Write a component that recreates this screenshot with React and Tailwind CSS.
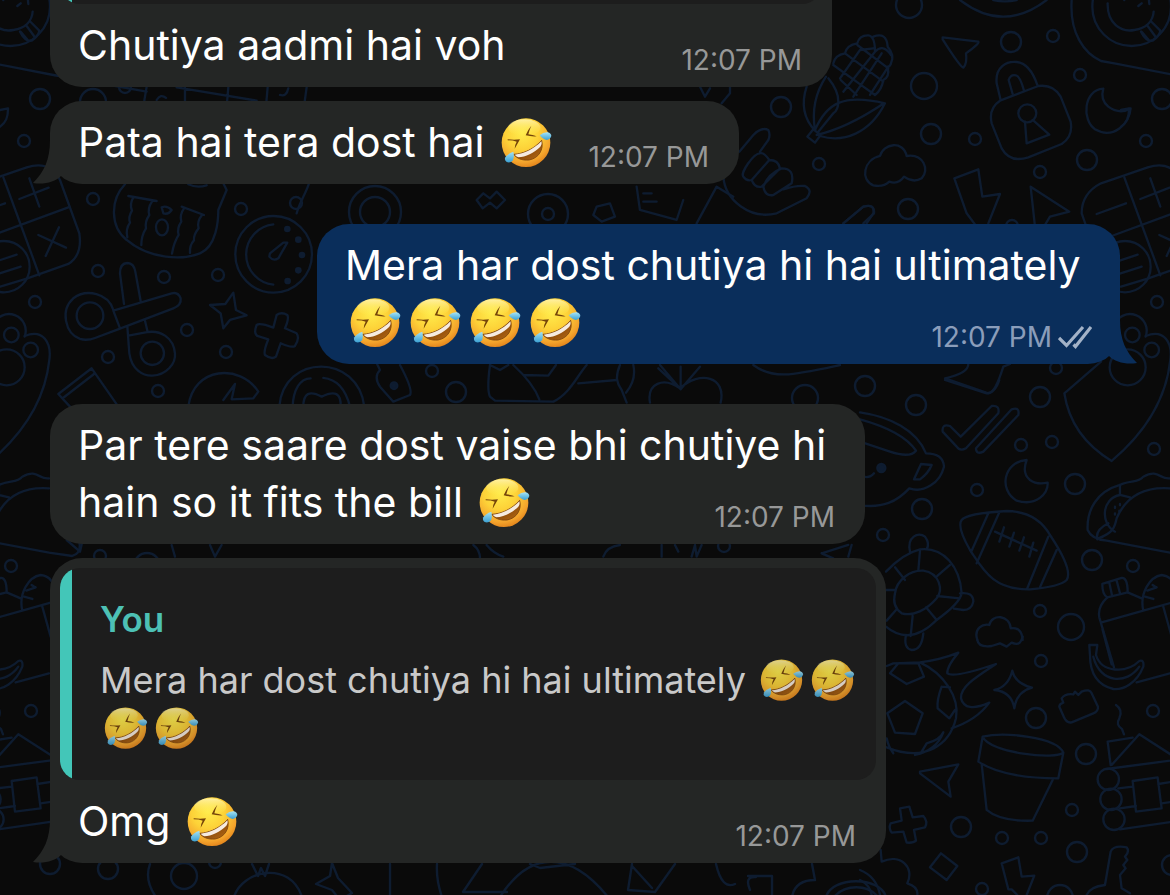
import React, { useId } from "react";

const RINGS = [
  [40, 99, 10], [93, 102, 13], [24, 141, 6], [93, 199, 6], [241, 209, 6], [296, 203, 6], [98, 271, 6],
  [164, 277, 6], [218, 275, 6], [35, 302, 6], [187, 330, 6], [108, 357, 6], [226, 352, 6], [158, 391, 6],
  [125, 87, 6], [909, 5, 13], [1011, 42, 10], [1053, 36, 6], [924, 86, 13], [931, 134, 10], [975, 139, 6],
  [1080, 75, 6], [1162, 99, 10], [1146, 141, 6], [1087, 160, 10], [1040, 172, 6], [908, 209, 10],
  [819, 164, 6], [1012, 226, 6], [916, 405, 10], [1040, 397, 10], [1056, 368, 6], [1157, 302, 6],
  [1021, 445, 6], [1052, 442, 6], [977, 490, 6], [1075, 484, 10], [922, 509, 10], [883, 535, 6],
  [1154, 449, 6], [1092, 560, 10], [1133, 566, 6], [1040, 611, 6], [1071, 627, 13], [1041, 661, 6],
  [1036, 718, 10], [1153, 711, 6], [1086, 754, 10], [1072, 810, 6], [961, 827, 10], [1002, 838, 6],
  [1041, 838, 6], [1077, 852, 10], [982, 889, 6], [1060, 898, 13], [1172, 865, 10], [11, 566, 6],
  [100, 556, 6], [147, 566, 13], [31, 711, 6], [50, 864, 10], [108, 869, 10], [184, 876, 13],
  [215, 862, 6], [432, 371, 6], [456, 392, 10], [865, 386, 10], [805, 398, 13], [724, 546, 6],
  [781, 107, 10], [548, 214, 20], [548, 214, 6], [375, 212, 26], [375, 212, 15],
];

/* Group whose children are drawn on a grid three times finer than the page. */
function Fine({ x, y, children }) {
  return <g transform={`translate(${x} ${y}) scale(0.3333)`} strokeWidth="7">{children}</g>;
}

/* Doodles at the seam of the wallpaper, repeated on both edges. */
function SeamDoodles() {
  return (
    <>
      <Fine x={1121} y={0}>
        <circle cx="32" cy="20" r="118" />
        <path d="M-40 10C-42 70 0 98 40 90C80 84 96 60 98 35M62 95L85 122M80 78L102 108M92 66L118 92M60 95Q75 125 95 122Q115 110 118 92M10 0l-4-6M62 10l-10 8M85 12l-2-20" />
        <path d="M-148 0C-155 100-110 160-60 183L-20 190L160 225L440 275" />
        <path d="M-90 720L-118 640Q-118 580-60 550L8 527L80 502Q150 480 180 540L238 700Q248 765 205 792L80 836L0 860" />
        <path d="M10 532L118 826M-28 708L205 622M88 535L118 620M58 597L146 563M-73 642L15 610M115 705L198 743M177 682L137 768" />
        <circle cx="12" cy="800" r="77" />
        <path d="M-20 787L50 764M-20 826L62 800" />
        <circle cx="34" cy="1005" r="22" />
        <path d="M-20 975A48 48 0 0 1 74 1010" />
        <circle cx="92" cy="1050" r="22" />
        <circle cx="20" cy="1102" r="54" />
        <path d="M74 1008C130 985 155 1030 148 1080Q130 1250-28 1383Q-150 1310-170 1180L-60 1085" />
        <path d="M0 380Q25 365 24 325L0 330" />
      </Fine>
      <Fine x={860} y={380}>
        <path d="M930 295C900 300 895 265 850 290C835 310 810 300 780 315C710 335 680 390 683 450Q695 478 740 482L930 518L1000 528Q1030 520 1020 480" />
        <path d="M715 475C760 460 765 440 770 415C800 345 860 320 930 325M765 455C720 430 725 355 780 345L810 352M780 315v28M712 478Q705 450 745 430M765 380v4M780 372v4M765 400v4M778 392v4" />
        <path d="M727 612L785 594Q803 592 803 637L742 652Q727 645 727 612ZM748 608L756 646M770 602L780 640" />
        <path d="M742 652Q712 680 718 712L762 862M803 637L845 655M850 692C838 640 870 590 905 585Q950 590 948 650M725 727L850 692L935 668M855 650L880 657M862 632L890 622M878 615L888 622M910 680L935 770" />
      </Fine>
      <Fine x={860} y={630}>
        <path d="M688 45H712L708 75C725 130 800 130 838 93Q853 88 850 110C830 160 790 180 760 177C710 165 690 130 690 75ZM700 80C720 160 800 165 838 110M728 0L755 103M830 157L930 130" />
        <path d="M768 225q22 15 10 40q-12 20 8 32l6 16" />
        <path d="M752 405L743 335L818 323M755 405L838 313L955 388M740 417L960 388" />
        <circle cx="745" cy="448" r="32" /><circle cx="753" cy="508" r="32" /><circle cx="762" cy="568" r="32" />
        <path d="M818 453L893 442L905 535L828 545ZM775 475L818 470M780 535L828 528M895 462L960 452M905 520L960 512M780 598L960 572" />
      </Fine>
    </>
  );
}

function Wallpaper() {
  return (
    <svg
      aria-hidden="true"
      viewBox="0 0 1170 895"
      preserveAspectRatio="xMidYMid slice"
      className="absolute inset-0 h-full w-full"
      fill="none"
      stroke="#0e1c30"
      strokeWidth="2.4"
      strokeLinecap="round"
      strokeLinejoin="round"
    >
      {RINGS.map(([x, y, r], i) => <circle key={i} cx={x} cy={y} r={r} />)}
      <SeamDoodles />
      <g transform="translate(-1121 0)"><SeamDoodles /></g>

      <Fine x={0} y={0}>
        <path d="M440 260L430 320M555 262V320M685 262L680 320M803 262L798 320M920 262L912 320M530 262L770 302M470 300q12-20 28-6M840 285q20 6 25-20" />
        <path d="M375 553C330 600 330 680 380 720C450 780 550 780 600 760C650 740 655 660 655 630L680 570L670 550M565 553Q590 565 620 556" />
        <path d="M385 588L470 603M400 592q-12 20-4 40q-12 20-6 36q-14 20-8 44M456 605q-14 20-8 40q-14 20-10 40q-14 22-14 50M545 620L612 645M552 625q-14 20-8 40q-14 20-8 40q-14 22-20 56M606 645q-16 20-10 40q-16 20-14 36q-14 16-12 38M485 622Q500 615 515 630Q505 645 490 640Z" />
        <ellipse cx="486" cy="682" rx="18" ry="24" />
        <circle cx="821" cy="763" r="115" />
        <path d="M820 673A91 91 0 0 0 820 854M862 728L835 775Q820 785 808 770L810 760L850 728Z" />
        <g fill="#0e1c30" stroke="none"><circle cx="862" cy="687" r="10" /><circle cx="895" cy="719" r="10" /><circle cx="906" cy="765" r="10" /><circle cx="895" cy="811" r="10" /><circle cx="863" cy="843" r="10" /></g>
        <circle cx="270" cy="947" r="40" /><circle cx="457" cy="1060" r="35" />
        <path d="M340 930C325 880 260 865 220 895C180 930 195 1000 240 1017Q262 1023 285 1014L350 990L520 925Q545 915 542 895Q535 875 515 880L340 932L360 985M372 912L360 820Q360 790 382 789Q402 790 406 815L422 903M382 978L388 1060C395 1110 430 1128 457 1127C500 1125 528 1090 525 1060C520 1010 480 992 445 996L385 1007M434 958L443 996" />
        <path d="M700 878L708 930L740 946L690 960L670 985L662 940L630 915L676 912Z" />
        <path d="M830 945Q845 935 862 945Q868 955 855 985L890 1000Q900 1015 885 1038Q875 1045 842 1030L828 1070Q815 1080 795 1065Q790 1055 805 1018L772 1008Q760 1000 770 975Q780 968 820 983Z" />
        <path d="M355 1220L275 1105L175 1182L210 1220M188 1195L285 1120M565 1220C580 1100 720 1090 775 1175L760 1195L695 1198L705 1152L670 1200" />
        <path d="M838 1220C850 1060 1075 1060 1093 1220M878 1220C880 1170 900 1135 932 1135M970 1134Q1030 1140 1050 1220M910 1220Q910 1160 965 1190Q1025 1160 1022 1220" />
      </Fine>

      <Fine x={820} y={0}>
        <path d="M420 0Q550 100 680 0M520 0Q555 8 590 0" />
        <path d="M368 112L475 125Q480 130 438 160Q442 190 430 203Q420 200 368 118Z" />
        <path d="M542 300L530 250C525 200 560 183 590 186Q630 190 652 255M578 282L566 240Q572 222 588 226Q600 228 612 272" />
        <path d="M540 302L655 258Q700 252 722 290L752 365Q760 410 725 432L625 472Q570 490 545 445L515 370Q505 325 540 302Z" />
        <circle cx="622" cy="340" r="27" />
        <path d="M615 365L620 430L688 404L638 360" />
        <path d="M850 266C790 270 785 360 825 388C880 420 930 370 932 325Q900 345 865 320Q840 300 850 266Z" />
        <path d="M160 556C120 540 130 480 180 468C190 430 250 420 260 468C310 460 330 510 305 535Q280 550 252 530Q235 555 208 545Q190 562 160 556Z" />
        <path d="M470 680L440 640L403 535L475 508L487 590L540 582L505 670M645 680L632 560L748 635L690 650L672 680M70 670L130 620Q165 610 162 640L130 670" />
        <path d="M40 190Q45 165 75 160Q80 135 112 130Q118 105 145 106Q165 108 165 155M160 110Q200 95 203 140Q225 165 213 190Q210 200 203 200Q210 230 190 240Q185 270 165 285M75 160L190 245M112 135L205 205M40 195L130 260L165 285M60 235L120 150L160 145M70 275L165 155M100 290L185 160M150 285L205 200M62 240L110 285M165 155Q190 130 213 165" />
      </Fine>

      <Fine x={700} y={60}>
        <path d="M345 210C380 130 430 100 555 130C510 220 430 250 360 228M350 225Q440 205 552 130M385 55C430 110 415 150 400 160L355 215M320 80C300 140 315 180 345 212M378 50C345 100 335 150 345 210M340 208L362 225L345 248L322 230Z" />
        <path d="M118 275L160 225Q185 200 205 210Q212 225 205 240L180 275M70 350C75 420 150 480 230 460L320 415Q340 390 315 378Q290 375 250 388M180 280C160 280 120 340 130 350Q140 365 155 360L208 300Q190 275 180 280ZM155 360Q165 385 185 380L240 325Q235 300 208 300M190 380Q195 410 220 405L275 370Q285 325 245 325Q205 340 190 380M65 130L90 100V80M0 80L15 110L30 85M430 490L490 440Q525 430 520 460L500 490" />
      </Fine>

      <Fine x={300} y={180}>
        <path d="M30 0C20 40 0 60-10 100M530 60L550 40L570 55L590 35L615 60L590 85L570 68L548 85ZM890 80L930 70L945 110L905 125L880 105ZM1010 20L1020 90L1130 120L1150 60M1030 40h25M1030 65h40M1190 130L1250 20L1300 50" />
      </Fine>
      <Fine x={300} y={280}>
        <path d="M230 250L240 270Q220 290 240 320L280 365L330 345Q340 330 300 255M570 255Q560 330 570 350L585 362L760 365C810 340 830 290 860 255M570 255L600 270L625 255M640 255Q700 310 718 358M670 285L745 287L768 255M835 310L950 300" />
        <circle cx="282" cy="317" r="10" fill="#0e1c30" />
      </Fine>
      <Fine x={460} y={350}>
        <path d="M480 45C465 80 470 100 485 120L500 158M520 45Q530 90 498 128M570 158C560 100 610 80 660 115C720 60 800 80 782 158M660 115L595 55M662 118L600 45M662 118V50M662 118L720 50M880 45C940 90 1000 75 1140 45" />
        <path d="M40 585Q60 600 60 625M80 585Q100 610 130 620M430 620Q440 590 480 585M605 585V620M645 585L655 605M695 620L705 585L710 620L725 585M1085 610L1165 585M1165 620L1175 585M1085 610L1120 625" />
      </Fine>

      <Fine x={880} y={230}>
        <path d="M265 402Q265 430 195 445L325 490Q345 490 370 410L390 402" />
      </Fine>

      <Fine x={860} y={380}>
        <path d="M0 97C90 110 170 150 198 220Q250 220 252 260C240 310 190 340 148 325C110 365 70 385 0 376M0 118C80 140 140 170 168 212Q150 235 90 215L0 185M183 252L215 255Q205 280 180 298L162 298ZM10 290Q30 295 42 280" />
        <circle cx="64" cy="264" r="12" fill="#0e1c30" />
        <path d="M248 155Q245 130 270 138L302 170L395 78Q420 75 415 100L318 205Q300 215 290 200ZM348 205L455 88Q480 80 475 105L370 215Q348 225 348 205Z" />
        <path d="M500 240C430 245 415 330 470 362C530 380 565 340 563 308Q530 315 510 300Q485 280 500 240Z" />
        <path d="M305 420Q320 400 440 393Q530 395 570 465Q640 570 620 600Q600 620 510 628C400 630 370 570 330 510Q290 440 305 420ZM385 400L335 512M418 397L350 550M565 470L502 625M590 510L540 622M405 455L530 512M432 442L418 485M462 458L448 500M492 472L478 512M520 488L508 530" />
        <path d="M78 575Q130 520 180 508C250 500 300 560 305 640Q300 670 230 720C170 780 120 775 78 740M150 515C140 470 175 455 195 470Q210 490 200 508M300 640Q340 635 340 665Q335 690 310 690L282 686" />
        <path d="M105 640C110 600 150 570 190 572C240 580 250 630 230 655C200 690 160 710 125 700Q95 680 105 640ZM180 512L175 572M270 555L232 588M105 562L135 600M78 630H103M232 648L298 655M198 682L230 720M158 708L152 768M108 690L80 722" />
        <path d="M352 780C340 745 370 730 388 735C395 700 450 705 452 745Q485 740 488 780M255 0L380 40Q405 40 418 0" />
      </Fine>

      <Fine x={860} y={630}>
        <path d="M352 30C355 50 380 50 395 48L420 40L440 50L455 38C480 50 485 30 488 20M138 15Q130 55 155 60Q185 60 190 10" />
        <path d="M80 108L100 100L180 97C250 130 300 200 288 265C270 340 200 400 80 352M180 97Q240 90 295 68Q260 110 262 130Q280 145 408 102C350 140 300 170 303 205Q315 250 388 218Q350 270 275 295M90 130L115 100H175L192 140L140 162ZM82 250L135 213L188 250L165 312L105 308ZM245 170Q230 210 233 235L268 265L285 240M245 170L270 172M80 325Q85 350 100 370M185 365L200 340Q240 330 250 307Q230 360 165 375" />
        <path d="M457 122Q465 160 516 173Q470 185 463 235Q455 185 403 180Q445 170 457 122Z" />
        <path d="M605 205Q615 190 640 193L645 185L655 195L665 185Q690 175 695 190L714 230Q715 245 700 250L635 277Q620 280 612 262L598 230Q598 222 610 218Z" />
        <path d="M368 320C430 305 590 320 610 368C590 390 390 370 368 320ZM368 320L355 395Q430 445 595 445L610 368M365 402L380 540Q420 575 518 572L578 450" />
        <path d="M180 425L295 403L265 455L272 500L180 430Z" />
        <path d="M120 535L148 530L158 562L190 558Q205 575 195 592L162 600L168 632Q160 640 140 638L130 605L95 608Q85 595 92 580L125 572Z" />
        <path d="M243 670L292 708L260 750L210 712ZM472 795L455 778H445L425 700L475 682L485 740L523 737L500 795M735 765L752 665Q760 645 800 652Q810 665 795 680L802 690L790 705L797 715L780 735L785 775L810 790M735 765Q690 770 680 795" />
        <path d="M62 660L65 695C120 670 165 710 142 760Q175 770 172 795M0 720Q50 740 60 795M0 750Q30 765 35 795" />
      </Fine>

      <path d="M150 864Q144 880 156 897M234 897C242 870 290 860 302 897M252 864l6 12l3-8l4 8l4-12M332 863L338 878L352 893L340 900L332 890L316 884L330 876ZM390 864V895M437 864Q436 880 442 897M482 864L463 892H507M500 897C530 850 570 850 608 897M530 864L540 868L575 864M632 864L628 890L655 892L675 864M632 866L652 888M716 864Q722 890 735 884M748 876h24v20M750 890q-6-14 6-13M812 864L815 880Q795 880 792 897M826 897C832 876 880 876 886 897M834 897C845 884 868 884 878 897" />
      <Fine x={0} y={540}>
        <path d="M200 0L240 35L248 0M515 15L525 50M630 15L645 50L665 15" />
      </Fine>
    </svg>
  );
}

function Rofl({ small = false }) {
  const id = useId();
  return (
    <svg
      role="img"
      aria-label="Rolling on the floor laughing"
      viewBox="-15 0 180 150"
      className={small ? "inline-block h-[43px] w-[51px] align-[-8px] opacity-85" : "inline-block h-[50px] w-[60px] align-[-10px]"}
    >
      <defs>
        <radialGradient id={`${id}-f`} cx="0.42" cy="0.3" r="0.75">
          <stop offset="0" stopColor="#ffec4c" />
          <stop offset="0.45" stopColor="#fdd238" />
          <stop offset="0.8" stopColor="#f4a42c" />
          <stop offset="1" stopColor="#de7c18" />
        </radialGradient>
        <linearGradient id={`${id}-s`} x1="0" y1="0" x2="0" y2="1">
          <stop offset="0" stopColor="#fffbd0" stopOpacity="0.7" />
          <stop offset="1" stopColor="#fff04e" stopOpacity="0" />
        </linearGradient>
        <linearGradient id={`${id}-m`} x1="0" y1="0" x2="1" y2="1">
          <stop offset="0.3" stopColor="#7a3f0a" />
          <stop offset="1" stopColor="#b86a12" />
        </linearGradient>
        <linearGradient id={`${id}-t`} x1="0" y1="0" x2="0" y2="1">
          <stop offset="0" stopColor="#a5e3f5" />
          <stop offset="1" stopColor="#3ba0d2" />
        </linearGradient>
      </defs>
      <circle cx="75" cy="77" r="73" fill={`url(#${id}-f)`} />
      <ellipse cx="70" cy="32" rx="48" ry="25" fill={`url(#${id}-s)`} />
      <path d="M38 112C68 111 100 95 122 70C129 98 113 124 84 129C63 131 47 124 38 112Z" fill={`url(#${id}-m)`} stroke="#7c430c" strokeWidth="2.5" />
      <path d="M41 113C69 111 100 95 121 73C123 79 122 84 118 89C99 108 74 120 52 121C47 119 44 116 41 113Z" fill="#f6ebe0" />
      <path d="M20 67Q40 69 57 67Q50 80 41 95Q42 82 47 74Q36 70 20 70Z" fill="#75450a" />
      <path d="M91 26Q80 39 74 55Q90 59 107 58Q95 53 82 52Q85 39 91 26Z" fill="#75450a" />
      <path d="M116 55Q128 45 140 46Q151 49 151 57Q148 68 137 69Q127 68 116 55Z" fill={`url(#${id}-t)`} />
      <path d="M37 104Q41 121 35 131Q27 139 17 135Q9 129 13 121Q20 110 37 104Z" fill={`url(#${id}-t)`} />
    </svg>
  );
}

function Tail({ side }) {
  return (
    <svg
      aria-hidden="true"
      viewBox="0 0 28 44"
      className={
        side === "left"
          ? "absolute bottom-0 -left-[17px] h-[44px] w-[28px] fill-[#242625]"
          : "absolute bottom-0 -right-[17px] h-[44px] w-[28px] -scale-x-100 fill-[#0a2e5b]"
      }
    >
      <path d="M17 0C17 20 11 32 0 43C11 45 22 42 28 36V0Z" />
    </svg>
  );
}

function Ticks() {
  return (
    <svg aria-label="Delivered" role="img" viewBox="0 0 34 24" className="mb-[2px] h-[24px] w-[34px]" fill="none" stroke="#a3b2c7" strokeWidth="3.2">
      <path d="M1 13L8.500 20.500L25 2M15.500 19.500L17.500 21.500L33 2" />
    </svg>
  );
}

function Message({ mine = false, tail, width, quote, children }) {
  return (
    <article
      className={`relative max-w-full rounded-[32px] ${width} ${mine ? "self-end bg-[#0a2e5b]" : "bg-[#242625]"}`}
    >
      {tail && <Tail side={mine ? "right" : "left"} />}
      {quote}
      <div className="relative grid py-[13px] pr-[28px] pl-[28px]">
        <p className="col-start-1 row-start-1 text-[41px] leading-[57px] text-white">{children}</p>
        <div
          className={`col-start-1 row-start-1 flex items-end gap-[6px] self-end justify-self-end text-[28px] leading-7 ${mine ? "text-[#8b9dba]" : "pr-[2px] text-[#979898]"}`}
        >
          <time dateTime="12:07">12:07 PM</time>
          {mine && <Ticks />}
        </div>
      </div>
    </article>
  );
}

export default function App() {
  return (
    <main className="relative min-h-screen overflow-hidden bg-[#0a0a0a] font-['Inter','Liberation_Sans',sans-serif]">
      <Wallpaper />
      <section aria-label="Conversation" className="relative flex flex-col items-start px-[50px] pb-8">
        <article className="w-[782px] max-w-full rounded-b-[32px] bg-[#242625]">
          <div className="mx-[10px] flex h-1 flex-col justify-end overflow-hidden">
            <div className="flex h-16 shrink-0 overflow-hidden rounded-[20px] bg-[#1d1d1d]">
              <div className="w-3 bg-[#43c6b8]" />
            </div>
          </div>
          <div className="grid py-[13px] pr-[30px] pl-[28px]">
            <p className="col-start-1 row-start-1 text-[41px] leading-[57px] text-white">Chutiya aadmi hai voh</p>
            <time dateTime="12:07" className="col-start-1 row-start-1 self-end justify-self-end text-[28px] leading-7 text-[#979898]">
              12:07 PM
            </time>
          </div>
        </article>

        <div className="mt-[14px] flex w-full flex-col items-start gap-10">
          <Message tail width="w-[689px]">Pata hai tera dost hai <Rofl /></Message>
          <Message mine tail width="w-[803px]">
            Mera har dost chutiya hi hai ultimately <Rofl /><Rofl /><Rofl /><Rofl />
          </Message>
          <Message width="w-[815px]">
            <span>Par tere saare dost vaise bhi chutiye hi</span> <span>hain so it fits the bill</span> <Rofl />
          </Message>
        </div>

        <div className="mt-[14px] flex w-full flex-col items-start">
          <Message
            tail
            width="w-[836px]"
            quote={
              <blockquote className="relative mx-[10px] mt-[10px] flex overflow-hidden rounded-[20px] bg-[#1d1d1d]">
                <div className="w-3 shrink-0 bg-[#43c6b8]" />
                <div className="pt-[27px] pr-4 pb-[28px] pl-[28px] leading-[48px]">
                  <cite className="mb-[13px] block text-[35px] leading-[48px] font-semibold text-[#4dc1b5] not-italic">You</cite>
                  <p className="text-[36px] leading-[48px] text-[#c9c9c9]">
                    Mera har dost chutiya hi hai ultimately <Rofl small /><Rofl small /><Rofl small /><Rofl small />
                  </p>
                </div>
              </blockquote>
            }
          >
            Omg <Rofl />
          </Message>
        </div>
      </section>
    </main>
  );
}
